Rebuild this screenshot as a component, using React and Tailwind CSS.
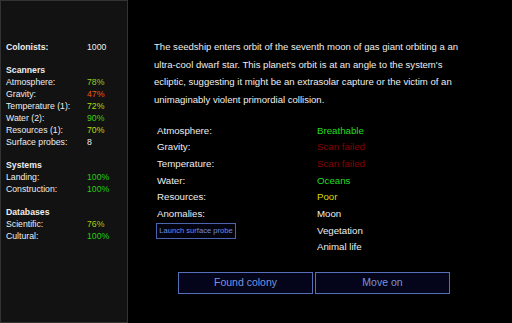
const scanners = [
  ['Atmosphere:', '78%', 'text-[#99cc22]'],
  ['Gravity:', '47%', 'text-[#ee5511]'],
  ['Temperature (1):', '72%', 'text-[#aadd11]'],
  ['Water (2):', '90%', 'text-[#44cc11]'],
  ['Resources (1):', '70%', 'text-[#bbdd11]'],
  ['Surface probes:', '8', 'text-[#eeeeee]'],
]

const systems = [
  ['Landing:', '100%', 'text-[#22cc11]'],
  ['Construction:', '100%', 'text-[#22cc11]'],
]

const databases = [
  ['Scientific:', '76%', 'text-[#aacc11]'],
  ['Cultural:', '100%', 'text-[#22cc11]'],
]

function StatRow({ label, value, color }) {
  return (
    <div className="flex h-[12px] items-center">
      <span className="w-[81px]">{label}</span>
      <span className={color}>{value}</span>
    </div>
  )
}

function Group({ title, rows }) {
  return (
    <div className="mt-[11px]">
      <div className="h-[12px] font-bold flex items-center">{title}</div>
      {rows.map(([l, v, c]) => <StatRow key={l} label={l} value={v} color={c} />)}
    </div>
  )
}

const planet = [
  ['Atmosphere:', 'Breathable', 'text-[#22dd22]'],
  ['Gravity:', 'Scan failed', 'text-[#880000]'],
  ['Temperature:', 'Scan failed', 'text-[#880000]'],
  ['Water:', 'Oceans', 'text-[#22dd22]'],
  ['Resources:', 'Poor', 'text-[#dddd00]'],
  ['Anomalies:', 'Moon', 'text-[#eeeeee]'],
]

export default function App() {
  return (
    <div className="flex h-[323px] w-[512px] bg-black text-[#eeeeee] overflow-hidden" style={{ fontFamily: '"Liberation Sans", Arial, sans-serif' }}>
      <aside className="w-[128px] shrink-0 border border-[#333333] bg-[#121212] pl-[5px] pt-[41px] text-[8.7px]">
        <div className="flex h-[12px] items-center">
          <span className="w-[81px] font-bold">Colonists:</span>
          <span>1000</span>
        </div>
        <Group title="Scanners" rows={scanners} />
        <Group title="Systems" rows={systems} />
        <Group title="Databases" rows={databases} />
      </aside>

      <main className="flex-1 pl-[26px] pt-[38px]">
        <div className="w-[320px]">
          <p className="text-[9.55px] leading-[17.5px]">
            The seedship enters orbit of the seventh moon of gas giant orbiting a an ultra-cool dwarf star. This planet's orbit is at an angle to the system's ecliptic, suggesting it might be an extrasolar capture or the victim of an unimaginably violent primordial collision.
          </p>

          <div className="mt-[14.5px] text-[9.7px]">
            {planet.map(([l, v, c]) => (
              <div key={l} className="grid grid-cols-2 h-[16.7px] items-center">
                <span className="pl-[3px]">{l}</span>
                <span className={`pl-[3px] ${c}`}>{v}</span>
              </div>
            ))}
            <div className="grid grid-cols-2 h-[16.7px] items-center">
              <span className="pl-[2px]">
                <button className="h-[16px] w-[80px] border border-[#4a64b0] bg-[#03030f] text-[7.6px] text-[#6f8ee0]">Launch surface probe</button>
              </span>
              <span className="pl-[3px]">Vegetation</span>
            </div>
            <div className="grid grid-cols-2 h-[16.7px] items-center">
              <span />
              <span className="pl-[3px]">Animal life</span>
            </div>
          </div>

          <div className="mt-[16px] flex justify-center gap-[2px]">
            <button className="h-[22px] w-[135px] border border-[#5570b8] bg-[#04041a] text-[10.5px] text-[#7896de]">Found colony</button>
            <button className="h-[22px] w-[135px] border border-[#5570b8] bg-[#04041a] text-[10.5px] text-[#7896de]">Move on</button>
          </div>
        </div>
      </main>
    </div>
  )
}
